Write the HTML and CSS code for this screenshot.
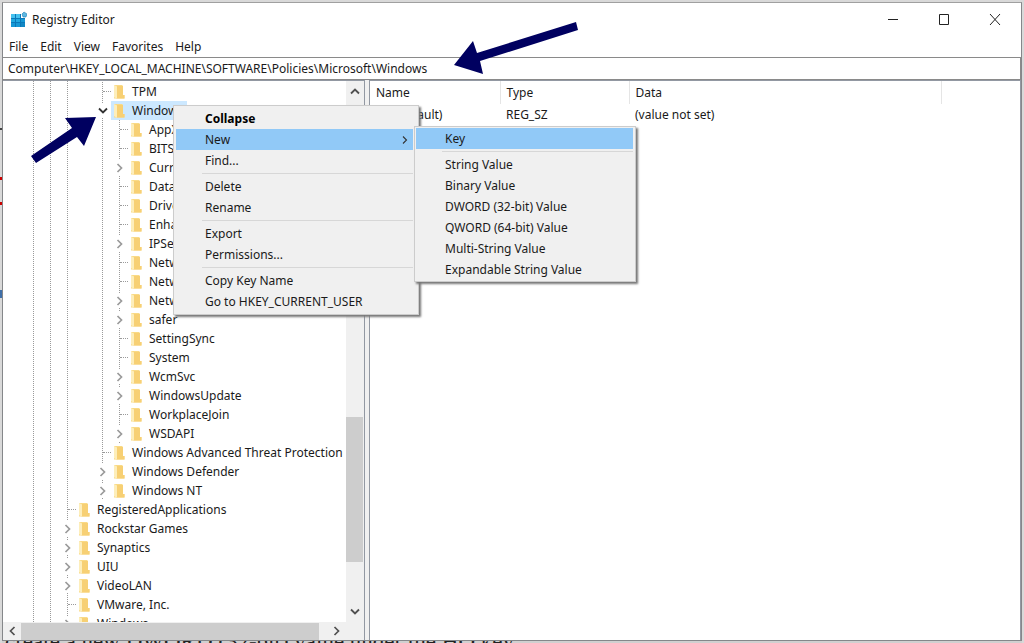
FILE: index.html
```html
<!DOCTYPE html>
<html lang="en">
<head>
<meta charset="utf-8">
<title>Registry Editor</title>
<meta name="viewport" content="width=device-width, initial-scale=1">
<link rel="stylesheet" href="styles.css">
</head>
<body>
<svg class="defs" width="0" height="0" aria-hidden="true">
  <symbol id="folder" viewBox="0 0 12 14">
    <path d="M1 0h8l1 1v9h1.500v3.500H1z" fill="#f9da86"/>
    <path d="M4 1h6v9h1.500v3.500H3z" fill="#f7d074"/>
    <path d="M1 0l3 1.500V14L1 12z" fill="#fdeebb"/>
  </symbol>
  <symbol id="right" viewBox="0 0 8 10"><path d="M1.500 1l4 4-4 4" fill="none" stroke="currentColor" stroke-width="1.700"/></symbol>
  <symbol id="thin-right" viewBox="0 0 8 10"><path d="M2 1.500l3.500 3.500L2 8.500" fill="none" stroke="currentColor" stroke-width="1.100"/></symbol>
  <symbol id="down" viewBox="0 0 10 8"><path d="M1 1.500l4 4 4-4" fill="none" stroke="currentColor" stroke-width="1.800"/></symbol>
</svg>

<main class="window">
  <header class="titlebar">
    <svg class="app-icon" viewBox="0 0 17 17" aria-hidden="true">
      <path d="M1 3h10v4h4v9H1z" fill="#0a78b8"/>
      <path d="M1 3h4v4H1zM6 3h4v4H6z" fill="#45c1ee"/>
      <path d="M1 8h4v3H1zM6 8h4v3H6z" fill="#22a9e0"/>
      <path d="M11 8h4v3h-4zM1 12h4v4H1zM6 12h4v4H6z" fill="#1698d5"/>
      <path d="M11 12h4v4h-4z" fill="#1287c4"/>
      <path d="M14 1l3 2-1 3-3 0-1-3z" fill="#5db7e2" stroke="#2182b6" stroke-width=".6"/>
    </svg>
    <h1 class="title">Registry Editor</h1>
    <div class="controls">
      <button class="control" aria-label="Minimize"><svg width="12" height="12"><path d="M1 5.500h10" stroke="#222"/></svg></button>
      <button class="control" aria-label="Maximize"><svg width="12" height="12"><path d="M1.500 .5h9v10h-9z" fill="none" stroke="#222"/></svg></button>
      <button class="control" aria-label="Close"><svg width="12" height="12"><path d="M1 0l10 11M11 0L1 11" stroke="#222"/></svg></button>
    </div>
  </header>
  <nav class="menubar" aria-label="Main menu">
    <button>File</button><button>Edit</button><button>View</button><button>Favorites</button><button>Help</button>
  </nav>
  <input class="address" type="text" aria-label="Address" value="Computer\HKEY_LOCAL_MACHINE\SOFTWARE\Policies\Microsoft\Windows">

  <div class="panes">
    <section class="tree-pane">
      <div class="tree-row">
        <ul class="tree" role="tree" aria-label="Registry keys">
          <li><ul class="level-a">
            <li class="leaf"><i class="twist"></i><span class="key"><svg><use href="#folder"/></svg>TPM</span></li>
            <li><i class="twist open"><svg><use href="#down"/></svg></i><span class="key selected"><svg><use href="#folder"/></svg>Windows</span></li>
            <li class="group"><ul class="level-b">
              <li class="leaf"><i class="twist"></i><span class="key"><svg><use href="#folder"/></svg>AppX</span></li>
              <li class="leaf"><i class="twist"></i><span class="key"><svg><use href="#folder"/></svg>BITS</span></li>
              <li><i class="twist shut"><svg><use href="#right"/></svg></i><span class="key"><svg><use href="#folder"/></svg>Current</span></li>
              <li class="leaf"><i class="twist"></i><span class="key"><svg><use href="#folder"/></svg>Data</span></li>
              <li class="leaf"><i class="twist"></i><span class="key"><svg><use href="#folder"/></svg>Driver</span></li>
              <li class="leaf"><i class="twist"></i><span class="key"><svg><use href="#folder"/></svg>Enhanc</span></li>
              <li><i class="twist shut"><svg><use href="#right"/></svg></i><span class="key"><svg><use href="#folder"/></svg>IPSec</span></li>
              <li class="leaf"><i class="twist"></i><span class="key"><svg><use href="#folder"/></svg>Network</span></li>
              <li class="leaf"><i class="twist"></i><span class="key"><svg><use href="#folder"/></svg>Network</span></li>
              <li><i class="twist shut"><svg><use href="#right"/></svg></i><span class="key"><svg><use href="#folder"/></svg>Network</span></li>
              <li><i class="twist shut"><svg><use href="#right"/></svg></i><span class="key"><svg><use href="#folder"/></svg>safer</span></li>
              <li class="leaf"><i class="twist"></i><span class="key"><svg><use href="#folder"/></svg>SettingSync</span></li>
              <li class="leaf"><i class="twist"></i><span class="key"><svg><use href="#folder"/></svg>System</span></li>
              <li><i class="twist shut"><svg><use href="#right"/></svg></i><span class="key"><svg><use href="#folder"/></svg>WcmSvc</span></li>
              <li><i class="twist shut"><svg><use href="#right"/></svg></i><span class="key"><svg><use href="#folder"/></svg>WindowsUpdate</span></li>
              <li class="leaf"><i class="twist"></i><span class="key"><svg><use href="#folder"/></svg>WorkplaceJoin</span></li>
              <li><i class="twist shut"><svg><use href="#right"/></svg></i><span class="key"><svg><use href="#folder"/></svg>WSDAPI</span></li>
            </ul></li>
            <li class="leaf"><i class="twist"></i><span class="key"><svg><use href="#folder"/></svg>Windows Advanced Threat Protection</span></li>
            <li><i class="twist shut"><svg><use href="#right"/></svg></i><span class="key"><svg><use href="#folder"/></svg>Windows Defender</span></li>
            <li><i class="twist shut"><svg><use href="#right"/></svg></i><span class="key"><svg><use href="#folder"/></svg>Windows NT</span></li>
          </ul></li>
          <li class="leaf"><i class="twist"></i><span class="key"><svg><use href="#folder"/></svg>RegisteredApplications</span></li>
          <li><i class="twist shut"><svg><use href="#right"/></svg></i><span class="key"><svg><use href="#folder"/></svg>Rockstar Games</span></li>
          <li><i class="twist shut"><svg><use href="#right"/></svg></i><span class="key"><svg><use href="#folder"/></svg>Synaptics</span></li>
          <li><i class="twist shut"><svg><use href="#right"/></svg></i><span class="key"><svg><use href="#folder"/></svg>UIU</span></li>
          <li><i class="twist shut"><svg><use href="#right"/></svg></i><span class="key"><svg><use href="#folder"/></svg>VideoLAN</span></li>
          <li class="leaf"><i class="twist"></i><span class="key"><svg><use href="#folder"/></svg>VMware, Inc.</span></li>
          <li><i class="twist shut"><svg><use href="#right"/></svg></i><span class="key"><svg><use href="#folder"/></svg>Windows</span></li>
        </ul>
        <div class="vbar">
          <button aria-label="Scroll up"><svg class="up"><use href="#down"/></svg></button>
          <div class="vtrack"><div class="vthumb"></div></div>
          <button aria-label="Scroll down"><svg><use href="#down"/></svg></button>
        </div>
      </div>
      <div class="hbar">
        <button aria-label="Scroll left"><svg class="left"><use href="#right"/></svg></button>
        <div class="htrack"><div class="hthumb"></div></div>
        <button aria-label="Scroll right"><svg><use href="#right"/></svg></button>
      </div>
    </section>
    <section class="values">
      <table>
        <colgroup><col class="c-name"><col class="c-type"><col class="c-data"><col></colgroup>
        <thead><tr><th>Name</th><th>Type</th><th>Data</th><th></th></tr></thead>
        <tbody><tr><td class="name">(Default)</td><td>REG_SZ</td><td>(value not set)</td><td></td></tr></tbody>
      </table>
    </section>
  </div>
</main>
<div class="page-behind" aria-hidden="true">create a new DWORD (32-bit) value under the HO key.</div>

<div class="menu context" role="menu">
  <button role="menuitem" class="default">Collapse</button>
  <button role="menuitem" class="active">New<svg><use href="#thin-right"/></svg></button>
  <button role="menuitem">Find...</button>
  <hr>
  <button role="menuitem">Delete</button>
  <button role="menuitem">Rename</button>
  <hr>
  <button role="menuitem">Export</button>
  <button role="menuitem">Permissions...</button>
  <hr>
  <button role="menuitem">Copy Key Name</button>
  <button role="menuitem">Go to HKEY_CURRENT_USER</button>
</div>
<div class="menu submenu" role="menu">
  <button role="menuitem" class="active">Key</button>
  <hr>
  <button role="menuitem">String Value</button>
  <button role="menuitem">Binary Value</button>
  <button role="menuitem">DWORD (32-bit) Value</button>
  <button role="menuitem">QWORD (64-bit) Value</button>
  <button role="menuitem">Multi-String Value</button>
  <button role="menuitem">Expandable String Value</button>
</div>

<svg class="arrow arrow-tree" viewBox="0 0 66 54" aria-hidden="true"><path d="M65 0L53 29L46 20L5 46L0 39L41 11L34 1z" fill="#000060"/></svg>
<svg class="arrow arrow-address" viewBox="0 0 124 52" aria-hidden="true"><path d="M0 43L19 19L23 31L122 0L124 8L26 39L29 52z" fill="#000060"/></svg>
</body>
</html>
```
FILE: styles.css
```css
* { box-sizing: border-box; }

body {
  margin: 0;
  padding: 2px 2px 0 2px;
  height: 100vh;
  overflow: hidden;
  display: flex;
  flex-direction: column;
  font-family: "Noto Sans", "Open Sans", sans-serif;
  font-size: 12px;
  line-height: 19px;
  color: #1a1a1a;
  background:
    linear-gradient(#444, #444) 0 128px / 2px 2px no-repeat,
    linear-gradient(#c00, #c00) 0 177px / 2px 3px no-repeat,
    linear-gradient(#c00, #c00) 0 202px / 2px 3px no-repeat,
    linear-gradient(#3f6fa8, #3f6fa8) 0 290px / 2px 8px no-repeat,
    #d9d9d9;
}

button {
  margin: 0;
  padding: 0;
  border: 0;
  background: none;
  font: inherit;
  color: inherit;
  text-align: left;
}

ul { list-style: none; margin: 0; padding: 0; }

.defs { position: absolute; }

.window {
  flex: 1;
  min-height: 0;
  display: flex;
  flex-direction: column;
  background: #fff;
  border: 1px solid #85878a;
  border-top-color: #a0a0a0;
}

.titlebar {
  display: flex;
  align-items: center;
  flex: none;
  height: 33px;
  padding: 0 1px 0 7px;
}
.app-icon { width: 17px; height: 17px; margin-right: 5px; }
.title { flex: 1; margin: 0; font-size: 12px; font-weight: 400; }
.controls { display: flex; }
.control {
  display: flex;
  align-items: center;
  justify-content: center;
  width: 51px;
  height: 32px;
}

.menubar {
  display: flex;
  flex: none;
  gap: 12px;
  height: 21px;
  padding-left: 6px;
}

.address {
  flex: none;
  width: 100%;
  height: 23px;
  margin: 0;
  padding: 0 5px;
  border: 1px solid #8a8a8a;
  border-width: 1px 1px 1px 0;
  border-radius: 0;
  outline: 0;
  background: #fff;
  font: inherit;
  color: inherit;
}

.panes {
  flex: 1;
  min-height: 0;
  display: flex;
  background: #f0f0f0;
}

.tree-pane {
  flex: none;
  width: 362px;
  display: flex;
  flex-direction: column;
  border: 1px solid #9298a2;
  border-width: 1px 1px 0 0;
  background: #fff;
}
.tree-row { flex: 1; min-height: 0; display: flex; }

.tree {
  flex: 1;
  min-width: 0;
  overflow: hidden;
  padding: 1px 0 0 56px;
  white-space: nowrap;
  background:
    repeating-linear-gradient(#9a9a9a 0 1px, transparent 1px 2px) 30px 0 / 1px 100% no-repeat,
    repeating-linear-gradient(#9a9a9a 0 1px, transparent 1px 2px) 47px 0 / 1px 100% no-repeat,
    repeating-linear-gradient(#9a9a9a 0 1px, transparent 1px 2px) 64px 0 / 1px 100% no-repeat;
}
.level-a { margin-left: 35px; }
.level-b { margin-left: 17px; }
.level-a, .level-b {
  background: repeating-linear-gradient(#9a9a9a 0 1px, transparent 1px 2px) 8px 0 / 1px 100% no-repeat;
}
.tree li { display: flex; align-items: center; }

.twist {
  flex: none;
  display: flex;
  align-items: center;
  justify-content: center;
  width: 17px;
  height: 15px;
}
.shut, .open { background: #fff; }
.shut { color: #9a9a9a; }
.open { color: #333; }
.shut svg { width: 8px; height: 10px; }
.open svg { width: 10px; height: 8px; }
.leaf .twist::after {
  content: "";
  width: 8px;
  margin-left: 8px;
  border-top: 1px dotted #9a9a9a;
}

.key {
  display: flex;
  align-items: center;
  height: 19px;
  padding: 0 4px 0 2px;
}
.key svg { flex: none; width: 12px; height: 14px; margin-right: 7px; }
.selected { background: #cce8ff; }

.vbar {
  flex: none;
  display: flex;
  flex-direction: column;
  width: 18px;
  background: #f0f0f0;
  color: #505050;
}
.vbar button, .hbar button {
  flex: none;
  display: flex;
  align-items: center;
  justify-content: center;
  width: 18px;
  height: 20px;
}
.vbar svg { width: 10px; height: 8px; }
.up { transform: scaleY(-1); }
.vtrack { flex: 1; display: flex; flex-direction: column; }
.vthumb { width: 17px; flex: 0 0 29%; margin-top: auto; margin-bottom: 40px; background: #cdcdcd; }

.hbar {
  flex: none;
  display: flex;
  align-items: center;
  height: 18px;
  padding-right: 18px;
  background: #f0f0f0;
  color: #505050;
}
.hbar svg { width: 8px; height: 10px; }
.left { transform: scaleX(-1); }
.htrack { flex: 1; }
.hthumb { width: 97%; height: 17px; background: #cdcdcd; }

.values {
  flex: 1;
  min-width: 0;
  margin-left: 4px;
  border: 1px solid #9298a2;
  border-bottom: 0;
  background: #fff;
}
.values table {
  width: 100%;
  table-layout: fixed;
  border-collapse: collapse;
}
.c-name { width: 130px; }
.c-type { width: 129px; }
.c-data { width: 312px; }
.values th, .values td {
  height: 23px;
  padding: 0 6px;
  font-weight: 400;
  text-align: left;
}
.values th { border-right: 1px solid #e5e5e5; }
.values th:last-child { border-right: 0; }
.values td { height: 21px; }
.values .name { padding-left: 24px; }

.page-behind {
  flex: none;
  height: 2px;
  overflow: hidden;
  padding-left: 3px;
  font-family: "Liberation Serif", serif;
  font-size: 23px;
  line-height: 2px;
  white-space: nowrap;
  color: #222;
  background: #d0d0d0;
}

.menu {
  position: absolute;
  display: flex;
  flex-direction: column;
  border: 1px solid #ccc;
  background: #f0f0f0;
  box-shadow: 2px 2px 2px #777;
}
.menu button {
  display: flex;
  align-items: center;
  justify-content: space-between;
  height: 21px;
  padding-left: 29px;
}
.menu svg { width: 8px; height: 10px; margin-right: 4px; color: #333; }
.menu hr {
  height: 1px;
  margin: 2px 0 2px 26px;
  border: 0;
  background: #d7d7d7;
}
.menu .active { background: #91c9f7; }
.menu .default { font-weight: 700; color: #000; }
.context { left: 173px; top: 105px; width: 246px; padding: 2px 5px 2px 2px; }
.submenu { left: 414px; top: 126px; width: 222px; padding: 1px 2px 1px 1px; }

.arrow { position: absolute; pointer-events: none; }
.arrow-tree { left: 31px; top: 117px; width: 66px; height: 54px; }
.arrow-address { left: 454px; top: 22px; width: 124px; height: 52px; }
```
